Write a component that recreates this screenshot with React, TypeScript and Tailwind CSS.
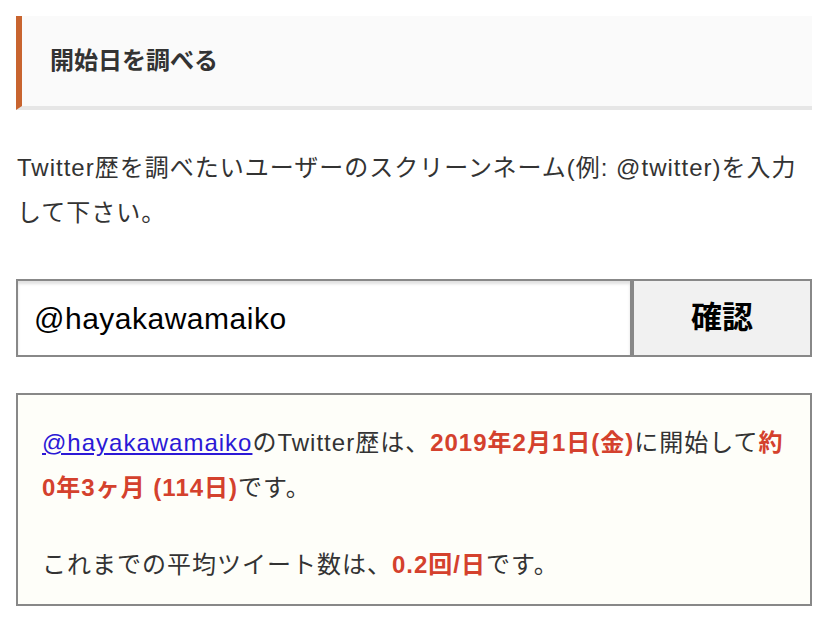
import {useState} from "react";

const font = {fontFamily: '"Liberation Sans", "Noto Sans CJK JP", sans-serif'}

export default function App() {
    const [name, setName] = useState('@hayakawamaiko')

    return (
        <div className="min-h-screen bg-white px-4 pt-4 text-[#333]" style={font}>
            <h2 className="flex items-center h-[94px] pl-[28px] bg-[#fafafa] border-l-[6px] border-l-[#c8642f] border-b-4 border-b-[#e6e6e6] text-[24px] font-bold text-[#333]">
                開始日を調べる
            </h2>

            <p className="mt-[35px] text-[24px] leading-[45px] tracking-[1px] pl-[1px]">
                Twitter歴を調べたいユーザーのスクリーンネーム(例: @twitter)を入力して下さい。
            </p>

            <form className="flex mt-[44px] h-[78px]" onSubmit={(e) => e.preventDefault()}>
                <input
                    className="flex-1 min-w-0 px-4 text-[30px] tracking-[0.5px] text-black bg-white border-2 border-[#888] shadow-[inset_0_3px_3px_rgba(0,0,0,0.12)] outline-none"
                    value={name}
                    onChange={(e) => setName(e.target.value)}
                    style={font}
                />
                <button
                    type="submit"
                    className="w-[180px] bg-[#f1f1f1] border-2 border-[#888] text-[31px] font-bold text-black"
                    style={font}
                >
                    確認
                </button>
            </form>

            <div className="mt-[36px] bg-[#fefef9] border-2 border-[#888] pl-[24px] pr-5 pt-[25px] pb-[17px] text-[24px] leading-[45px] tracking-[1px] text-[#333]">
                <p>
                    <a href="#" className="text-[#2b19d6] underline">@hayakawamaiko</a>
                    のTwitter歴は、
                    <span className="font-bold text-[#d4412d]">2019年2月1日(金)</span>
                    に開始して
                    <span className="font-bold text-[#d4412d]">約<br/>0年3ヶ月 (114日)</span>
                    です。
                </p>
                <p className="mt-[32px]">
                    これまでの平均ツイート数は、
                    <span className="font-bold text-[#d4412d]">0.2回/日</span>
                    です。
                </p>
            </div>
        </div>
    )
}
